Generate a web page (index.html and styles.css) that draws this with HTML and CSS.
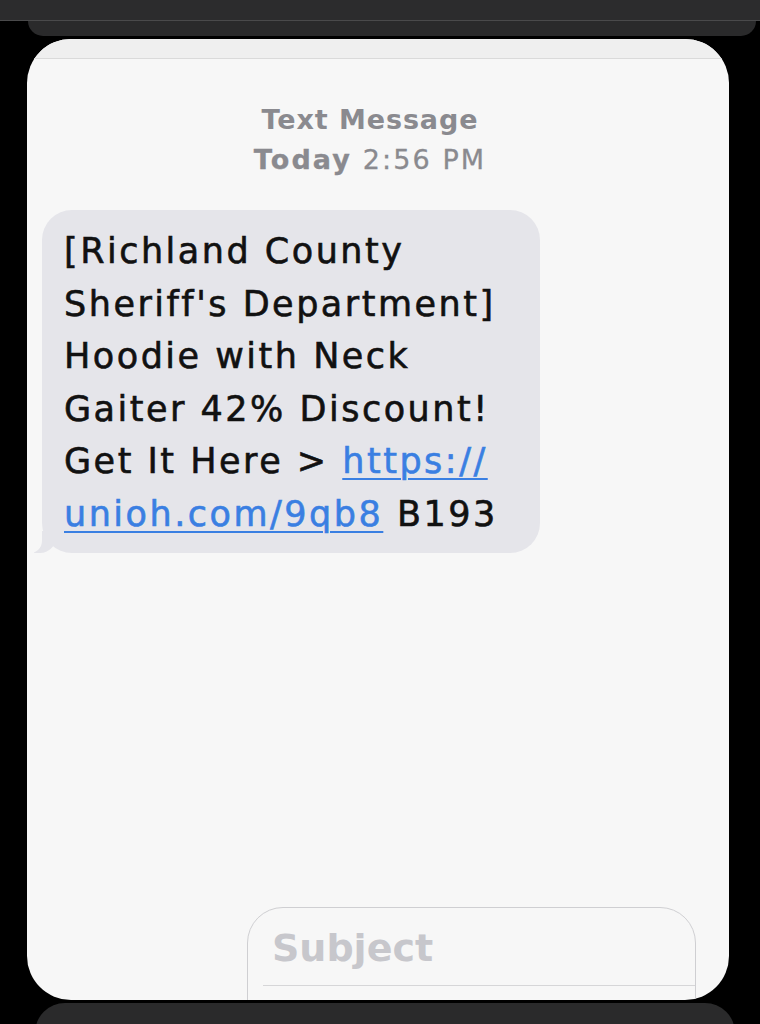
FILE: index.html
```html
<!DOCTYPE html>
<html lang="en">
<head>
    <meta charset="UTF-8">
    <meta name="viewport" content="width=device-width, initial-scale=1.0">
    <title>Text Message</title>
    <link rel="stylesheet" href="styles.css">
</head>
<body>
    <!-- Card behind (previous screen) -->
    <div class="top-bar"></div>
    <div class="prev-card"></div>

    <!-- Message screen -->
    <div class="card">
        <div class="card-strip"></div>

        <div class="thread-header">
            <div class="thread-title">Text Message</div>
            <div class="thread-time"><b>Today</b> 2:56 PM</div>
        </div>

        <div class="bubble">
            [Richland County<br>
            Sheriff's Department]<br>
            Hoodie with Neck<br>
            Gaiter 42% Discount!<br>
            Get It Here &gt; <a href="#" class="link">https://</a><br>
            <a href="#" class="link">unioh.com/9qb8</a> B193
        </div>

        <!-- Compose box -->
        <div class="compose">
            <div class="compose-subject">Subject</div>
        </div>
    </div>

    <div class="next-card"></div>
</body>
</html>
```

FILE: styles.css
```css
body {
    margin: 0;
    background-color: #000;
    font-family: "DejaVu Sans", "Liberation Sans", sans-serif;
    overflow: hidden;
}

/* Cards around the main one */
.top-bar {
    height: 20px;
    background-color: #2c2c2d;
    border-bottom: 1px solid #4a4a4b;
}

.prev-card {
    height: 15px;
    margin: 0 4px 0 28px;
    background-color: #2a2a2b;
    border-radius: 0 0 16px 16px;
}

.next-card {
    height: 40px;
    margin: 3px 25px 0 35px;
    background-color: #2a2a2b;
    border-radius: 30px 30px 0 0;
}

/* Main card */
.card {
    height: 961px;
    margin: 3px 31px 0 27px;
    background-color: #f7f7f7;
    border-radius: 44px;
    overflow: hidden;
}

.card-strip {
    height: 19px;
    background-color: #efefef;
    border-bottom: 1px solid #dadada;
}

.thread-header {
    margin-top: 41px;
    padding-right: 16px;
    text-align: center;
    color: #8a8a8f;
    font-size: 27px;
    line-height: 40px;
}

.thread-title {
    font-weight: bold;
    letter-spacing: 0.9px;
}

.thread-time {
    letter-spacing: 2.1px;
    -webkit-text-stroke: 0.3px #8a8a8f;
}

/* Incoming bubble */
.bubble {
    position: relative;
    width: 456px;
    margin: 30px 0 0 15px;
    padding: 15px 20px 13px 22px;
    background-color: #e5e5ea;
    border-radius: 30px;
    color: #111;
    font-size: 35px;
    line-height: 52.5px;
    letter-spacing: 2.5px;
    -webkit-text-stroke: 0.6px #111;
}

.bubble::before {
    content: "";
    position: absolute;
    bottom: 0;
    left: -8px;
    width: 22px;
    height: 22px;
    background-color: #e5e5ea;
    border-bottom-right-radius: 16px;
}

.bubble::after {
    content: "";
    position: absolute;
    bottom: 0;
    left: -12px;
    width: 12px;
    height: 24px;
    background-color: #f7f7f7;
    border-bottom-right-radius: 12px;
}

.link {
    color: #3a7fe2;
    -webkit-text-stroke: 0.6px #3a7fe2;
    text-decoration: underline;
    text-decoration-thickness: 2px;
    text-underline-offset: 5px;
}

/* Compose field */
.compose {
    height: 130px;
    width: 447px;
    margin: 354px 0 0 220px;
    border: 1.5px solid #cfcfd2;
    border-radius: 36px;
}

.compose-subject {
    margin-left: 15px;
    padding: 15px 0 12px 9px;
    border-bottom: 1.5px solid #d6d6d8;
    color: #c7c7cc;
    font-size: 38px;
    font-weight: bold;
    line-height: 50px;
}
```
